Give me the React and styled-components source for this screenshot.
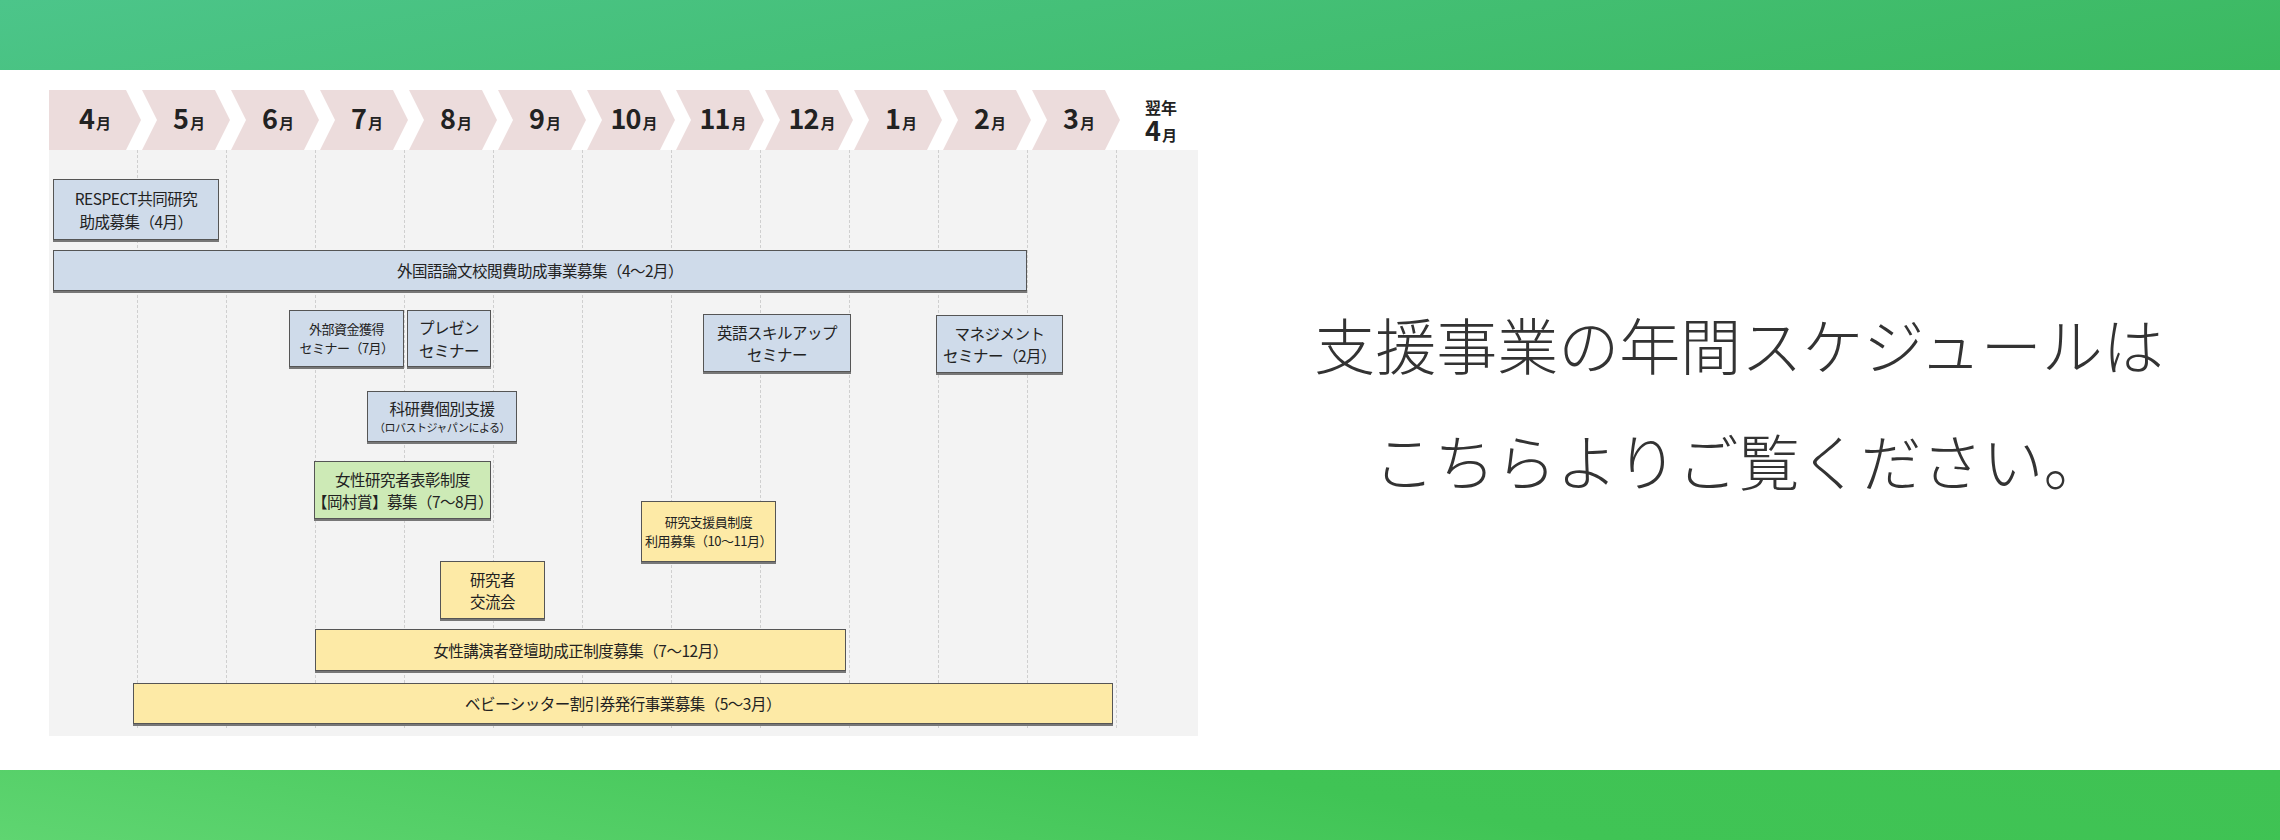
import styled, { createGlobalStyle } from "styled-components";

const COL = 89;
const months = ["4", "5", "6", "7", "8", "9", "10", "11", "12", "1", "2", "3"];

const bars = [
  { x: 4, y: 89, w: 166, h: 61, tone: "blue", lines: ["RESPECT共同研究", "助成募集（4月）"] },
  { x: 4, y: 160, w: 974, h: 41, tone: "blue", lines: ["外国語論文校閲費助成事業募集（4〜2月）"] },
  { x: 240, y: 220, w: 115, h: 57, tone: "blue", small: true, lines: ["外部資金獲得", "セミナー（7月）"] },
  { x: 358, y: 220, w: 84, h: 57, tone: "blue", lines: ["プレゼン", "セミナー"] },
  { x: 654, y: 224, w: 148, h: 58, tone: "blue", lines: ["英語スキルアップ", "セミナー"] },
  { x: 887, y: 225, w: 127, h: 58, tone: "blue", lines: ["マネジメント", "セミナー（2月）"] },
  { x: 318, y: 301, w: 150, h: 51, tone: "blue", lines: ["科研費個別支援", "（ロバストジャパンによる）"], sub: true },
  { x: 265, y: 371, w: 177, h: 58, tone: "green", lines: ["女性研究者表彰制度", "【岡村賞】募集（7〜8月）"] },
  { x: 592, y: 411, w: 135, h: 61, tone: "yellow", small: true, lines: ["研究支援員制度", "利用募集（10〜11月）"] },
  { x: 391, y: 471, w: 105, h: 58, tone: "yellow", lines: ["研究者", "交流会"] },
  { x: 266, y: 539, w: 531, h: 42, tone: "yellow", lines: ["女性講演者登壇助成正制度募集（7〜12月）"] },
  { x: 84, y: 593, w: 980, h: 41, tone: "yellow", lines: ["ベビーシッター割引券発行事業募集（5〜3月）"] },
];

const tones = { blue: "#cfdbea", green: "#cdeab6", yellow: "#fdeaa6" };

const Global = createGlobalStyle`
  html, body { margin: 0; padding: 0; background: #fff; }
  body { font-family: "Noto Sans CJK JP", "Noto Sans", sans-serif; }
`;

const Page = styled.div`
  width: 2280px;
  height: 840px;
  display: flex;
  flex-direction: column;
`;

const TopBand = styled.div`
  height: 70px;
  background: linear-gradient(170deg, #4cc58a 0%, #3bb95f 100%);
`;

const BottomBand = styled.div`
  height: 70px;
  background: linear-gradient(10deg, #5fd571 0%, #40c455 60%, #3fc253 100%);
`;

const Main = styled.div`
  flex: 1;
  display: flex;
  padding: 20px 0 0 49px;
`;

const Chart = styled.div`
  position: relative;
  width: 1149px;
  height: 646px;
  background: #f3f3f3;
  flex: none;
`;

const Header = styled.div`
  display: flex;
  height: 60px;
  background: #fff;
`;

const Chevron = styled.div`
  width: ${COL + 3}px;
  margin-right: -3px;
  height: 60px;
  flex: none;
  background: #ecdcdc;
  display: flex;
  align-items: baseline;
  justify-content: center;
  padding: 14px 0 0 ${(p) => (p.$first ? 0 : 10)}px;
  box-sizing: border-box;
  clip-path: ${(p) =>
    p.$first
      ? "polygon(0 0, calc(100% - 15px) 0, 100% 50%, calc(100% - 15px) 100%, 0 100%)"
      : "polygon(4px 0, calc(100% - 15px) 0, 100% 50%, calc(100% - 15px) 100%, 4px 100%, 19px 50%)"};
`;

const Num = styled.span`
  font-family: "Noto Sans CJK JP", sans-serif;
  font-weight: 700;
  font-size: 27px;
  line-height: 1;
  color: #222;
  letter-spacing: -1px;
`;

const Unit = styled.span`
  font-weight: 700;
  font-size: 15px;
  line-height: 1;
  color: #222;
  margin-left: 2px;
`;

const NextYear = styled.div`
  width: 72px;
  display: flex;
  flex-direction: column;
  align-items: center;
  justify-content: center;
  padding-left: 8px;
  font-weight: 700;
  color: #222;
`;

const NextLabel = styled.div`
  font-size: 16px;
  line-height: 18px;
`;

const NextMonth = styled.div`
  display: flex;
  align-items: baseline;
  line-height: 1;
`;

const Lines = styled.div`
  position: absolute;
  top: 60px;
  left: 0;
  bottom: 8px;
  display: flex;
  pointer-events: none;
`;

const Col = styled.div`
  width: ${COL}px;
  border-right: 1px dashed #cfcfcf;
  box-sizing: border-box;
`;

const Bar = styled.div`
  position: absolute;
  box-sizing: border-box;
  background: ${(p) => tones[p.$tone]};
  border: 1px solid #555;
  box-shadow: 0 2px 0 #777;
  display: flex;
  flex-direction: column;
  align-items: center;
  justify-content: center;
  text-align: center;
  color: #222;
  font-size: ${(p) => (p.$small ? 13 : 15.5)}px;
  line-height: 1.45;
  white-space: nowrap;
  letter-spacing: -0.5px;
`;

const Sub = styled.span`
  font-size: 11px;
`;

const Message = styled.div`
  flex: 1;
  display: flex;
  flex-direction: column;
  align-items: center;
  padding-top: 218px;
  gap: 44px;
  font-family: "Noto Sans CJK JP", sans-serif;
  font-weight: 300;
  font-size: 61px;
  line-height: 72px;
  color: #333;
`;

export default function App() {
  return (
    <Page>
      <Global />
      <TopBand />
      <Main>
        <Chart>
          <Header>
            {months.map((m, i) => (
              <Chevron key={m} $first={i === 0}>
                <Num>{m}</Num>
                <Unit>月</Unit>
              </Chevron>
            ))}
            <NextYear>
              <NextLabel>翌年</NextLabel>
              <NextMonth>
                <Num>4</Num>
                <Unit>月</Unit>
              </NextMonth>
            </NextYear>
          </Header>
          <Lines>
            {Array.from({ length: 12 }).map((_, i) => (
              <Col key={i} />
            ))}
          </Lines>
          {bars.map((b, i) => (
            <Bar
              key={i}
              $tone={b.tone}
              $small={b.small}
              style={{ left: b.x, top: b.y, width: b.w, height: b.h }}
            >
              <span>{b.lines[0]}</span>
              {b.lines[1] && (b.sub ? <Sub>{b.lines[1]}</Sub> : <span>{b.lines[1]}</span>)}
            </Bar>
          ))}
        </Chart>
        <Message>
          <div>支援事業の年間スケジュールは</div>
          <div>こちらよりご覧ください。</div>
        </Message>
      </Main>
      <BottomBand />
    </Page>
  );
}
